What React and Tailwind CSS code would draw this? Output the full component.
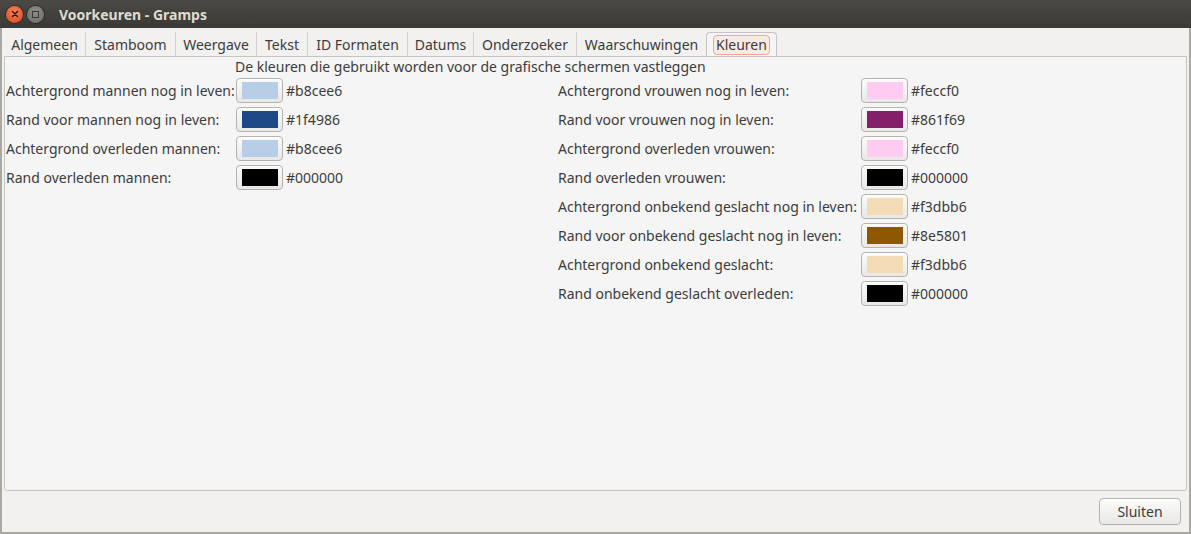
import React from "react";

const left = [
  { label: "Achtergrond mannen nog in leven:", color: "#b8cee6" },
  { label: "Rand voor mannen nog in leven:", color: "#1f4986" },
  { label: "Achtergrond overleden mannen:", color: "#b8cee6" },
  { label: "Rand overleden mannen:", color: "#000000" },
];

const right = [
  { label: "Achtergrond vrouwen nog in leven:", color: "#feccf0" },
  { label: "Rand voor vrouwen nog in leven:", color: "#861f69" },
  { label: "Achtergrond overleden vrouwen:", color: "#feccf0" },
  { label: "Rand overleden vrouwen:", color: "#000000" },
  { label: "Achtergrond onbekend geslacht nog in leven:", color: "#f3dbb6" },
  { label: "Rand voor onbekend geslacht nog in leven:", color: "#8e5801" },
  { label: "Achtergrond onbekend geslacht:", color: "#f3dbb6" },
  { label: "Rand onbekend geslacht overleden:", color: "#000000" },
];

const tabs = [
  { label: "Algemeen", w: "w-[82px]" },
  { label: "Stamboom", w: "w-[90px]" },
  { label: "Weergave", w: "w-[81px]" },
  { label: "Tekst", w: "w-[51px]" },
  { label: "ID Formaten", w: "w-[100px]" },
  { label: "Datums", w: "w-[66px]" },
  { label: "Onderzoeker", w: "w-[103px]" },
  { label: "Waarschuwingen", w: "w-[129px]" },
];

function Swatch({ color }) {
  return (
    <div className="flex h-[25px] w-[47px] items-center justify-center rounded-[4px] border border-[#b5b3af] bg-gradient-to-b from-[#fbfbfa] to-[#e9e8e6] shadow-[inset_0_1px_0_#fff]">
      <div className="h-[17px] w-[36px]" style={{ backgroundColor: color }} />
    </div>
  );
}

function ColorRow({ item }) {
  return (
    <div className="flex h-[29px] items-center">
      <div className="flex-1 whitespace-nowrap">{item.label}</div>
      <Swatch color={item.color} />
      <div className="ml-[3px] w-[60px]">{item.color}</div>
    </div>
  );
}

export default function App() {
  return (
    <div
      className="flex h-[534px] w-[1191px] flex-col overflow-hidden bg-[#f2f1f0] text-[14px] text-[#3c3c3c]"
      style={{ fontFamily: '"Noto Sans", "DejaVu Sans", sans-serif' }}
    >
      {/* title bar */}
      <div className="flex h-[28px] shrink-0 items-center bg-gradient-to-b from-[#4a4944] to-[#3a3935] pl-[6px]">
        <div className="flex h-[17px] w-[17px] items-center justify-center rounded-full bg-[radial-gradient(circle_at_50%_35%,#f5825a,#dc4315)] shadow-[0_0_0_1px_#2f2e2a]">
          <svg width="8" height="8" viewBox="0 0 8 8">
            <path d="M1.5 1.5l5 5M6.5 1.5l-5 5" stroke="#3a1a0e" strokeWidth="1.6" strokeLinecap="round" />
          </svg>
        </div>
        <div className="ml-[4px] flex h-[17px] w-[17px] items-center justify-center rounded-full bg-[radial-gradient(circle_at_50%_35%,#8e8d88,#6c6b67)] shadow-[0_0_0_1px_#2f2e2a]">
          <div className="h-[7px] w-[7px] border-[1.5px] border-[#3a3935]" />
        </div>
        <div className="ml-[15px] text-[14px] font-bold text-[#dfdbd2]">Voorkeuren - Gramps</div>
      </div>

      {/* body */}
      <div className="flex flex-1 flex-col border-x-2 border-b-2 border-[#a9a8a3]">
        {/* tabs */}
        <div className="flex h-[28px] items-end pl-[2px] pt-[4px]">
          {tabs.map((t, i) => (
            <div
              key={t.label}
              className={
                "flex h-[24px] items-center justify-center " +
                t.w +
                (i < tabs.length - 1 ? " border-r border-[#d4d2cf]" : "")
              }
            >
              {t.label}
            </div>
          ))}
          <div className="-mb-px flex h-[25px] w-[71px] items-center justify-center rounded-t-[4px] border border-b-0 border-[#c6c4c1] bg-[#f5f5f5]">
            <span className="rounded-[4px] border border-[#f0a88e] bg-[#fbe9e2] px-[2px] leading-[18px]">
              Kleuren
            </span>
          </div>
        </div>

        {/* content panel */}
        <div className="mx-[2px] h-[435px] rounded-b-[3px] border border-[#c6c4c1] bg-[#f5f5f5]">
          <div className="pl-[230px] pt-[1px] leading-[18px]">
            De kleuren die gebruikt worden voor de grafische schermen vastleggen
          </div>
          <div className="flex">
            <div className="w-[341px] pl-[1px]">
              {left.map((item, i) => (
                <ColorRow key={i} item={item} />
              ))}
            </div>
            <div className="ml-[212px] w-[413px]">
              {right.map((item, i) => (
                <ColorRow key={i} item={item} />
              ))}
            </div>
          </div>
        </div>

        {/* footer */}
        <div className="flex flex-1 items-center justify-end pr-[8px]">
          <button className="-mt-[1px] h-[27px] w-[82px] rounded-[4px] border border-[#b5b3af] bg-gradient-to-b from-[#fbfbfa] to-[#e9e8e6] text-[#3c3c3c] shadow-[inset_0_1px_0_#fff]">
            Sluiten
          </button>
        </div>
      </div>
    </div>
  );
}
